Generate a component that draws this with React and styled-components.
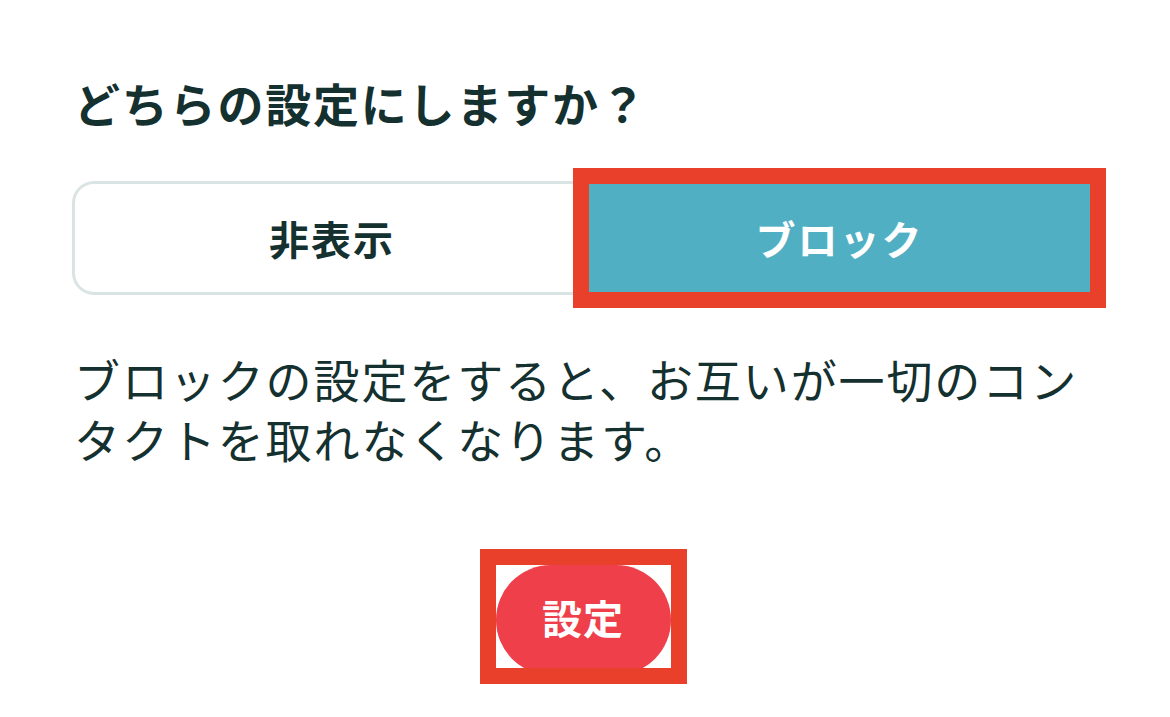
import React from "react";
import styled, { createGlobalStyle } from "styled-components";

const GlobalStyle = createGlobalStyle`
  body {
    margin: 0;
    background: #fff;
    font-family: "Noto Sans CJK JP", "Noto Sans", sans-serif;
    color: #14302f;
  }
`;

const Page = styled.div`
  width: 1022px;
  padding: 72px 0 40px 72px;
`;

const Title = styled.h2`
  margin: 0 0 49px 2px;
  font-size: 46px;
  line-height: 60px;
  font-weight: 700;
  letter-spacing: 1.8px;
`;

const Segmented = styled.div`
  display: grid;
  grid-template-columns: 514px 1fr;
  height: 108px;
  border: 3px solid #dbe4e4;
  border-right-width: 4px;
  border-radius: 22px;
  background: #fff;
`;

const Segment = styled.button`
  border: none;
  margin: 0;
  padding: 0;
  font-family: inherit;
  font-size: 40px;
  font-weight: 700;
  letter-spacing: 2px;
  cursor: pointer;
  background: ${(p) => (p.active ? "#51afc3" : "transparent")};
  color: ${(p) => (p.active ? "#fff" : "#14302f")};
  border-radius: ${(p) => (p.active ? "0" : "19px 0 0 19px")};
  outline: ${(p) => (p.marked ? "16px solid #e8402a" : "none")};
`;

const Body = styled.p`
  margin: 53px 0 0 2px;
  font-size: 46px;
  line-height: 60px;
  font-weight: 400;
  letter-spacing: 1.9px;
`;

const Actions = styled.div`
  display: flex;
  justify-content: center;
  margin-top: 81px;
`;

const Marked = styled.div`
  width: 175px;
  height: 103px;
  overflow: hidden;
  border: 16px solid #e8402a;
`;

const SubmitButton = styled.button`
  display: flex;
  align-items: center;
  justify-content: center;
  width: 175px;
  height: 110px;
  border: none;
  border-radius: 55px;
  background: #ef3f4a;
  color: #fff;
  font-family: inherit;
  font-size: 40px;
  font-weight: 700;
  letter-spacing: 1px;
  padding: 0 0 6px;
  cursor: pointer;
`;

export default function App() {
  return (
    <>
      <GlobalStyle />
      <Page>
        <Title>どちらの設定にしますか？</Title>
        <Segmented>
          <Segment>非表示</Segment>
          <Segment active marked>
            ブロック
          </Segment>
        </Segmented>
        <Body>
          ブロックの設定をすると、お互いが一切のコンタクトを取れなくなります。
        </Body>
        <Actions>
          <Marked>
            <SubmitButton>設定</SubmitButton>
          </Marked>
        </Actions>
      </Page>
    </>
  );
}
